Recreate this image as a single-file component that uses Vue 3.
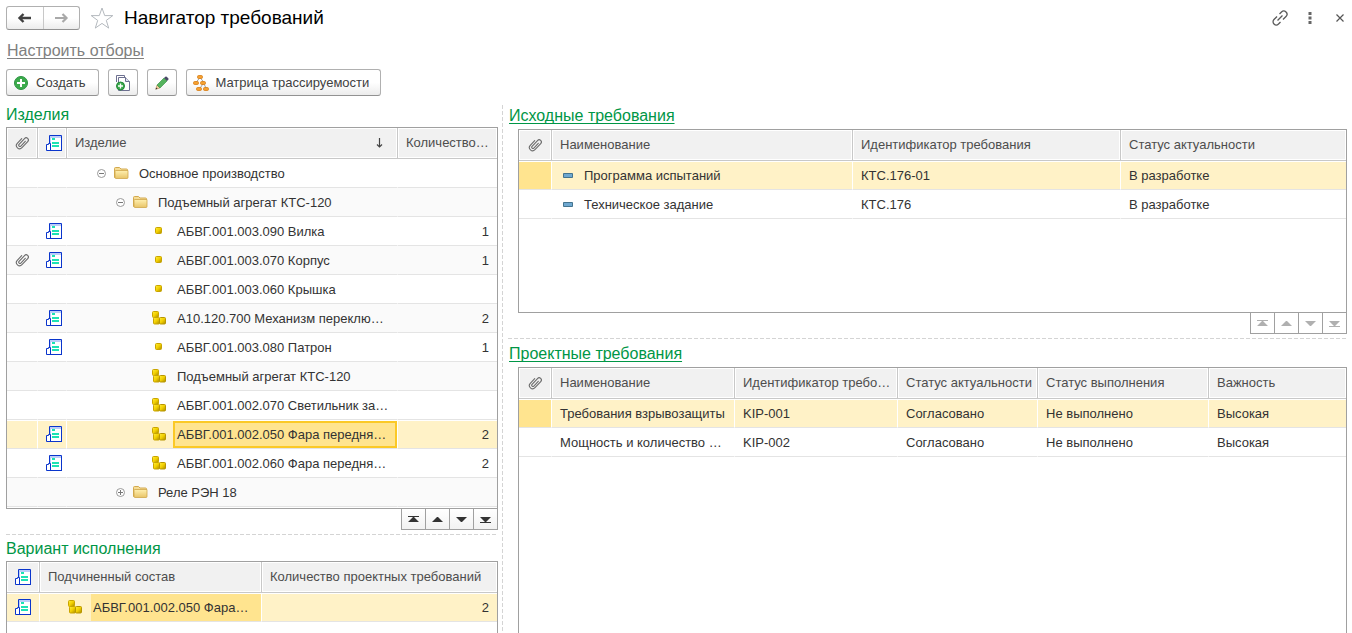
<script setup>
import { ref } from 'vue'

const products = [
  { level: 0, kind: 'folder', open: true, name: 'Основное производство' },
  { level: 1, kind: 'folder', open: true, name: 'Подъемный агрегат КТС-120' },
  { level: 2, kind: 'part', doc: true, name: 'АБВГ.001.003.090 Вилка', count: 1 },
  { level: 2, kind: 'part', doc: true, clip: true, name: 'АБВГ.001.003.070 Корпус', count: 1 },
  { level: 2, kind: 'part', name: 'АБВГ.001.003.060 Крышка' },
  { level: 2, kind: 'unit', doc: true, name: 'А10.120.700 Механизм переклю…', count: 2 },
  { level: 2, kind: 'part', doc: true, name: 'АБВГ.001.003.080 Патрон', count: 1 },
  { level: 2, kind: 'unit', name: 'Подъемный агрегат КТС-120' },
  { level: 2, kind: 'unit', name: 'АБВГ.001.002.070 Светильник за…' },
  { level: 2, kind: 'unit', doc: true, name: 'АБВГ.001.002.050 Фара передня…', count: 2 },
  { level: 2, kind: 'unit', doc: true, name: 'АБВГ.001.002.060 Фара передня…', count: 2 },
  { level: 1, kind: 'folder', open: false, name: 'Реле РЭН 18' }
]

const sources = [
  { name: 'Программа испытаний', id: 'КТС.176-01', status: 'В разработке' },
  { name: 'Техническое задание', id: 'КТС.176', status: 'В разработке' }
]

const projects = [
  { name: 'Требования взрывозащиты', id: 'KIP-001', status: 'Согласовано', done: 'Не выполнено', rank: 'Высокая' },
  { name: 'Мощность и количество …', id: 'KIP-002', status: 'Согласовано', done: 'Не выполнено', rank: 'Высокая' }
]

const pager = [
  { label: 'В начало', d: 'M1 1h11v1H1zM6 2h1l5 5H1z' },
  { label: 'Вверх', d: 'M6 2h1l5 5H1z' },
  { label: 'Вниз', d: 'M1 2h11l-5 5H6z' },
  { label: 'В конец', d: 'M1 2h11l-5 5H6zM1 7h11v1H1z' }
]

const product = ref(9)
const source = ref(0)
const project = ref(0)
</script>

<template>
  <div class="page">
    <svg class="defs" aria-hidden="true">
      <defs>
        <linearGradient id="gold" x1="0" y1="0" x2="1" y2="1">
          <stop offset="0" stop-color="#ffee3c" />
          <stop offset="0.5" stop-color="#f2cf00" />
          <stop offset="1" stop-color="#a88a00" />
        </linearGradient>
        <linearGradient id="fold" x1="0" y1="0" x2="0" y2="1">
          <stop offset="0" stop-color="#fff0b0" />
          <stop offset="1" stop-color="#e8c468" />
        </linearGradient>
        <symbol id="doc" viewBox="0 0 16 16">
          <path d="M3.500.5h12v15h-12z" fill="#fff" stroke="#0a35cc" />
          <path d="M4 1h11v2H4zM4 3h1v12H4z" fill="#bccdf8" />
          <path d="M.5 9.500h2v-1h2v7h-4z" fill="#fff" stroke="#0a35cc" />
          <path d="M3 15h13v1H3z" fill="#0a35cc" />
          <path d="M6 3h3v2H6zM6 7h7v2H6zM6 10h7v2H6z" fill="#1de2b4" />
        </symbol>
        <symbol id="clip" viewBox="0 0 14 14">
          <g fill="none" stroke="#6c6c6c" stroke-width="1.100" stroke-linecap="round" transform="rotate(43 7 7)">
            <path d="M3.800 4v6.500a3.200 3.200 0 0 0 6.400 0V2a2.200 2.200 0 0 0-4.400 0v8a1.200 1.200 0 0 0 2.400 0V3.500" />
          </g>
        </symbol>
        <symbol id="folder" viewBox="0 0 15 14">
          <path d="M.5 11.500V2.500q0-1 1-1h4l1.500 1.500h5.500q1 0 1 1v7.500z" fill="#f6dc94" stroke="#d2a94e" />
          <path d="M1.500 4.500h12.500v7q0 1-1 1H2q-1 0-1-1V5z" fill="url(#fold)" stroke="#cfa64a" stroke-width=".8" />
        </symbol>
        <symbol id="part" viewBox="0 0 15 14">
          <rect x="3.500" y="3.500" width="6" height="6" rx="1" fill="url(#gold)" stroke="#c9a400" />
        </symbol>
        <symbol id="unit" viewBox="0 0 15 14">
          <rect x=".5" y=".5" width="6" height="6" rx="1" fill="url(#gold)" stroke="#c9a400" />
          <rect x="1.500" y="6.500" width="6" height="6.500" rx="1" fill="url(#gold)" stroke="#c9a400" />
          <rect x="7.500" y="6.500" width="6" height="6.500" rx="1" fill="url(#gold)" stroke="#b89600" />
        </symbol>
      </defs>
    </svg>

    <header class="top">
      <div class="history">
        <button type="button" aria-label="Назад">
          <svg width="15" height="12" viewBox="0 0 15 12"><path d="M3 6h11M6.500 2 2.500 6l4 4" fill="none" stroke="#404040" stroke-width="2.400" /></svg>
        </button>
        <button type="button" aria-label="Вперед">
          <svg width="15" height="12" viewBox="0 0 15 12"><path d="M1 6h11M8.500 2l4 4-4 4" fill="none" stroke="#a9a9a9" stroke-width="2.200" /></svg>
        </button>
      </div>
      <button type="button" class="bare" aria-label="В избранное">
        <svg width="24" height="22" viewBox="0 0 24 22"><path d="M12 1l2.700 7.600h8.100l-6.500 4.800 2.400 7.700L12 16.400l-6.700 4.700 2.400-7.700L1.200 8.600h8.100z" fill="#fff" stroke="#b4b9be" /></svg>
      </button>
      <h1>Навигатор требований</h1>
      <div class="window">
        <button type="button" class="bare" aria-label="Ссылка">
          <svg width="16" height="16" viewBox="0 0 16 16">
            <g fill="none" stroke="#5a5a5a" stroke-width="1.300" transform="rotate(-45 8 8)">
              <path d="M7 4.800H2.700a3.200 3.200 0 0 0 0 6.400H5.500M9 11.200h4.300a3.200 3.200 0 0 0 0-6.400H10.500M4.500 8h7" />
            </g>
          </svg>
        </button>
        <button type="button" class="bare" aria-label="Еще">
          <svg width="4" height="12" viewBox="0 0 4 12"><path d="M.5 0h3v3h-3zM.5 4.500h3v3h-3zM.5 9h3v3h-3z" fill="#666" /></svg>
        </button>
        <button type="button" class="bare" aria-label="Закрыть">
          <svg width="8" height="8" viewBox="0 0 8 8"><path d="M.5.5l7 7M7.500.5l-7 7" stroke="#555" stroke-width="1.200" /></svg>
        </button>
      </div>
    </header>

    <a class="filters" href="#filters">Настроить отборы</a>

    <div class="toolbar">
      <button type="button" class="btn">
        <svg width="14" height="14" viewBox="0 0 14 14"><circle cx="7" cy="7" r="6.500" fill="#3cab4c" stroke="#2c9440" /><path d="M7 3v8M3 7h8" stroke="#fff" stroke-width="2" /></svg>
        <span>Создать</span>
      </button>
      <button type="button" class="btn square" aria-label="Создать копированием">
        <svg width="16" height="18" viewBox="0 0 16 18">
          <path d="M1.500 8V1.500h8V3" fill="none" stroke="#6d7090" />
          <path d="M3.500 16.500v-13h7l4 4v9z" fill="#fff" stroke="#6d7090" /><path d="M10.500 3.500v4h4" fill="#dfe2ee" stroke="#6d7090" />
          <circle cx="5.500" cy="12" r="4" fill="#3cab4c" stroke="#218638" /><path d="M5.500 9.500v5M3 12h5" stroke="#fff" stroke-width="1.300" />
        </svg>
      </button>
      <button type="button" class="btn square" aria-label="Изменить">
        <svg width="14" height="14" viewBox="0 0 14 14">
          <path d="M.8 13.200 2 9l3 3z" fill="#f1cf9e" stroke="#b98a50" stroke-width=".6" /><path d="M.5 13.500l.8-2 1.200 1.200z" fill="#333" />
          <path d="M2 9l7-7 3 3-7 7z" fill="#55b45e" stroke="#2f8d3c" stroke-width=".6" />
          <path d="M9 2l1.300-1.300q.7-.5 1.400 0l1.600 1.600q.5.700 0 1.400L12 5z" fill="#4b4b68" />
        </svg>
      </button>
      <button type="button" class="btn matrix">
        <svg width="16" height="16" viewBox="0 0 16 16">
          <path d="M6.500 3 3.500 7M7.500 3l3 4M10.500 8l-4 6M10.500 8l3 6" stroke="#a0a0a0" fill="none" />
          <g fill="#f5a132" stroke="#d87e14" stroke-width=".8"><rect x="4.500" y=".5" width="5" height="3" rx="1.200" /><rect x=".5" y="6.500" width="5" height="3" rx="1.200" /><rect x="7.500" y="6.500" width="5" height="3" rx="1.200" /><rect x="3.500" y="12.500" width="5" height="3" rx="1.200" /><rect x="10.500" y="12.500" width="5" height="3" rx="1.200" /></g>
        </svg>
        <span>Матрица трассируемости</span>
      </button>
    </div>

    <main class="work">
      <section class="pane">
        <h2>Изделия</h2>
        <div class="box">
          <table>
            <colgroup><col class="w31" /><col class="w29" /><col /><col class="w99" /></colgroup>
            <thead>
              <tr>
                <th class="mark" aria-label="Файлы"><svg class="i14"><use href="#clip" /></svg></th>
                <th class="mark end" aria-label="Требования"><svg class="i16"><use href="#doc" /></svg></th>
                <th>
                  <div class="sort">
                    <span>Изделие</span>
                    <svg width="7" height="10" viewBox="0 0 7 10"><path d="M3.500 0v9M1 6.500l2.500 2.500L6 6.500" fill="none" stroke="#444" stroke-width="1.200" /></svg>
                  </div>
                </th>
                <th>Количество…</th>
              </tr>
            </thead>
            <tbody class="striped">
              <tr v-for="(p, i) in products" :key="i" :class="{ sel: product === i }" @click="product = i">
                <td class="mark"><svg v-if="p.clip" class="i14"><use href="#clip" /></svg></td>
                <td class="mark end"><svg v-if="p.doc" class="i16"><use href="#doc" /></svg></td>
                <td class="tree">
                  <div :class="['node', 'l' + p.level]">
                    <span class="exp">
                      <button v-if="p.kind === 'folder'" type="button" class="bare" :aria-label="p.open ? 'Свернуть' : 'Развернуть'">
                        <svg width="9" height="9" viewBox="0 0 9 9"><circle cx="4.500" cy="4.500" r="4" fill="#fff" stroke="#999" /><path :d="p.open ? 'M2 4.500h5' : 'M2 4.500h5M4.500 2v5'" stroke="#777" /></svg>
                      </button>
                    </span>
                    <svg class="kind"><use :href="'#' + p.kind" /></svg>
                    <span class="name">{{ p.name }}</span>
                  </div>
                </td>
                <td class="num">{{ p.count }}</td>
              </tr>
            </tbody>
          </table>
        </div>
        <div class="pager">
          <button v-for="b in pager" :key="b.label" type="button" :aria-label="b.label">
            <svg width="13" height="9" viewBox="0 0 13 9"><path :d="b.d" /></svg>
          </button>
        </div>
        <div class="split"></div>
        <h2>Вариант исполнения</h2>
        <div class="box last">
          <table>
            <colgroup><col class="w33" /><col /><col class="w235" /></colgroup>
            <thead>
              <tr>
                <th class="mark" aria-label="Требования"><svg class="i16"><use href="#doc" /></svg></th>
                <th>Подчиненный состав</th>
                <th>Количество проектных требований</th>
              </tr>
            </thead>
            <tbody>
              <tr class="sel">
                <td class="mark"><svg class="i16"><use href="#doc" /></svg></td>
                <td class="tree">
                  <div class="node variant">
                    <svg class="kind"><use href="#unit" /></svg>
                    <span class="name">АБВГ.001.002.050 Фара…</span>
                  </div>
                </td>
                <td class="num">2</td>
              </tr>
            </tbody>
          </table>
        </div>
      </section>

      <div class="vsplit"></div>

      <section class="pane right">
        <h2><a href="#source">Исходные требования</a></h2>
        <div class="box source">
          <table>
            <colgroup><col class="w33" /><col class="w301" /><col class="w268" /><col /></colgroup>
            <thead>
              <tr>
                <th class="mark" aria-label="Файлы"><svg class="i14"><use href="#clip" /></svg></th>
                <th>Наименование</th><th>Идентификатор требования</th><th>Статус актуальности</th>
              </tr>
            </thead>
            <tbody>
              <tr v-for="(r, i) in sources" :key="r.id" :class="{ sel: source === i }" @click="source = i">
                <td class="mark cur"></td>
                <td>
                  <div class="item">
                    <svg width="10" height="7" viewBox="0 0 10 7"><path d="M.5.5h9v4h-9z" fill="#6fa8d0" stroke="#44748f" /></svg>
                    <span>{{ r.name }}</span>
                  </div>
                </td>
                <td>{{ r.id }}</td>
                <td>{{ r.status }}</td>
              </tr>
            </tbody>
          </table>
        </div>
        <div class="pager off">
          <button v-for="b in pager" :key="b.label" type="button" disabled :aria-label="b.label">
            <svg width="13" height="9" viewBox="0 0 13 9"><path :d="b.d" /></svg>
          </button>
        </div>
        <div class="split"></div>
        <h2><a href="#project">Проектные требования</a></h2>
        <div class="box last">
          <table>
            <colgroup><col class="w33" /><col class="w183" /><col class="w163" /><col class="w140" /><col class="w171" /><col /></colgroup>
            <thead>
              <tr>
                <th class="mark" aria-label="Файлы"><svg class="i14"><use href="#clip" /></svg></th>
                <th>Наименование</th><th>Идентификатор требо…</th><th>Статус актуальности</th><th>Статус выполнения</th><th>Важность</th>
              </tr>
            </thead>
            <tbody>
              <tr v-for="(r, i) in projects" :key="r.id" :class="{ sel: project === i }" @click="project = i">
                <td class="mark cur"></td>
                <td>{{ r.name }}</td>
                <td>{{ r.id }}</td>
                <td>{{ r.status }}</td>
                <td>{{ r.done }}</td>
                <td>{{ r.rank }}</td>
              </tr>
            </tbody>
          </table>
        </div>
      </section>
    </main>
  </div>
</template>

<style>
body { margin: 0; background: #fff; }
</style>

<style scoped>
* { box-sizing: border-box; }
.page {
  display: flex;
  flex-direction: column;
  min-height: 100vh;
  padding: 6px 5px 0 6px;
  font: 13px/16px "Liberation Sans", Arial, sans-serif;
  color: #333;
}
.defs { position: absolute; width: 0; height: 0; }
svg { display: block; flex: none; }
button { font: inherit; color: inherit; padding: 0; margin: 0; }
.bare { border: 0; background: none; display: flex; align-items: center; justify-content: center; }

.top { display: flex; align-items: center; height: 24px; }
.history {
  display: flex;
  width: 74px;
  height: 24px;
  margin-right: 10px;
  border: 1px solid #b0b0b0;
  border-bottom-color: #929292;
  border-radius: 3px;
  background: linear-gradient(#fff 50%, #ececec);
}
.history button { flex: 1; display: flex; align-items: center; justify-content: center; border: 0; background: none; }
.history button + button { border-left: 1px solid #c8c8c8; }
h1 { margin: 0 0 0 10px; font-size: 19px; line-height: 24px; font-weight: 400; color: #000; }
.window { display: flex; align-items: center; gap: 20px; margin-left: auto; padding-right: 3px; }
.window button:last-child { margin-left: 4px; }

.filters {
  align-self: flex-start;
  margin: 11px 0 0 1px;
  font-size: 16px;
  line-height: 20px;
  color: #808080;
  text-decoration: underline 1px;
  text-underline-offset: 2px;
  text-decoration-skip-ink: none;
}

.toolbar { display: flex; gap: 9px; margin-top: 8px; }
.btn {
  display: flex;
  align-items: center;
  gap: 8px;
  height: 27px;
  padding: 0 13px 0 7px;
  border: 1px solid #b0b0b0;
  border-bottom-color: #929292;
  border-radius: 3px;
  background: linear-gradient(#fff 50%, #ececec);
  color: #404040;
}
.square { width: 30px; padding: 0; justify-content: center; }
.matrix { gap: 6px; padding: 0 11px 0 6px; }

.work {
  flex: 1;
  display: grid;
  grid-template-columns: minmax(0, 492fr) 10px minmax(0, 839fr);
  margin-top: 9px;
}
.vsplit { background: repeating-linear-gradient(#d4d4d4 0 4px, transparent 4px 6px) 4px 0 / 1px 100% no-repeat; }
.pane { display: flex; flex-direction: column; }
h2 { margin: 0; height: 22px; font-size: 16px; line-height: 20px; font-weight: 400; color: #009646; }
.right h2 { height: 24px; line-height: 22px; padding-left: 1px; }
h2 a { color: inherit; text-decoration: underline 1px; text-underline-offset: 2px; text-decoration-skip-ink: none; }
.split { height: 9px; background: repeating-linear-gradient(90deg, #d4d4d4 0 4px, transparent 4px 6px) 0 4px / 100% 1px no-repeat; }

.box { border: 1px solid #a0a0a0; padding-bottom: 1px; }
.right .box, .right .pager { margin-left: 10px; }
.source { min-height: 184px; }
.last { flex: 1; border-bottom: 0; }

table { width: 100%; table-layout: fixed; border-collapse: separate; border-spacing: 0; }
.w29 { width: 29px; }
.w31 { width: 31px; }
.w33 { width: 33px; }
.w99 { width: 99px; }
.w140 { width: 140px; }
.w163 { width: 163px; }
.w171 { width: 171px; }
.w183 { width: 183px; }
.w235 { width: 235px; }
.w268 { width: 268px; }
.w301 { width: 301px; }
th, td { padding: 0 8px; overflow: hidden; white-space: nowrap; text-align: left; font-weight: 400; }
th {
  height: 31px;
  border-right: 1px solid #c8c8c8;
  border-bottom: 1px solid #c8c8c8;
  background: #f1f1f1;
  box-shadow: inset 0 0 0 1px #fff;
  color: #4d4d4d;
}
td {
  height: 29px;
  padding-top: 2px;
  border-right: 1px solid #fff;
  border-bottom: 1px solid #e4e4e4;
  background-clip: padding-box;
}
th:last-child, td:last-child { border-right: 0; }
.striped tr:nth-child(even) td { background-color: #fafafa; border-right-color: #fafafa; }
tr.sel td, .striped tr.sel:nth-child(even) td {
  background-color: #fff2c7;
  border-right-color: #fff;
  box-shadow: inset 0 1px 0 #fff;
}
tr.sel td.cur { background-color: #ffe48f; }
th.mark, td.mark { padding: 0; }
.mark svg { margin: 0 auto; }
th.end, td.end { padding-right: 4px; }
.end svg { margin: 0 0 0 auto; }
.i14 { width: 14px; height: 14px; }
.i16 { width: 16px; height: 16px; }
.sort { display: flex; align-items: center; justify-content: space-between; padding-right: 6px; }
.num { text-align: right; }
td.tree { padding: 0; }
.node { display: flex; align-items: center; height: 28px; padding: 1px 0 0 27px; }
.l1 { padding-left: 46px; }
.l2 { padding-left: 65px; }
.exp { width: 14px; margin-right: 6px; padding-bottom: 1px; display: flex; justify-content: center; }
.kind { width: 15px; height: 14px; margin-bottom: 1px; }
.name {
  flex: 1;
  margin-left: 6px;
  padding: 0 2px;
  height: 27px;
  line-height: 23px;
  border: 2px solid transparent;
  overflow: hidden;
}
.sel .name { background: #ffe48f; border-color: #fbc926; }
.variant { padding-left: 28px; }
.sel .variant .name { margin-left: 8px; padding: 0; border-color: #ffe48f; }
.item { display: flex; align-items: center; gap: 11px; padding-left: 3px; }

.pager { display: flex; align-self: flex-end; margin-top: -1px; border: 1px solid #a0a0a0; }
.pager button {
  display: flex;
  align-items: center;
  justify-content: center;
  width: 24px;
  height: 20px;
  border: 0;
  border-right: 1px solid #a0a0a0;
  background: linear-gradient(#fff, #f2f2f2);
}
.pager button:last-child { width: 23px; border-right: 0; }
.pager path { fill: #333; }
.off path { fill: #b0b0b0; }
.off button { background: #fff; }
</style>
